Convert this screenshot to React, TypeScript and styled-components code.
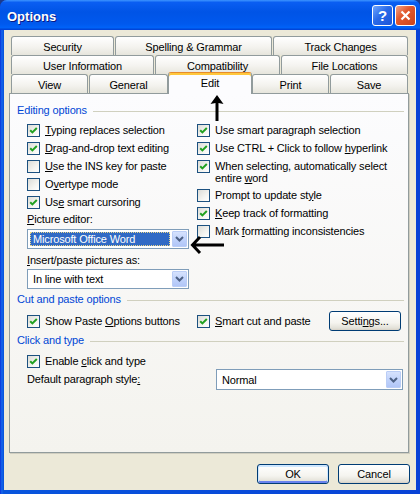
import React from 'react';
import styled, { createGlobalStyle, css } from 'styled-components';

const GlobalStyle = createGlobalStyle`
  html, body {
    margin: 0;
    padding: 0;
    background: #1b3a8c;
  }
  body {
    font-family: "Liberation Sans", Arial, sans-serif;
    font-size: 11px;
    letter-spacing: -0.15px;
    color: #000;
  }
  * { box-sizing: border-box; }
`;

const Window = styled.div`
  width: 420px;
  height: 494px;
  display: flex;
  flex-direction: column;
  border-radius: 7px 7px 0 0;
  overflow: hidden;
  background: #0842d6;
`;

const TitleBar = styled.div`
  height: 30px;
  flex: none;
  display: flex;
  align-items: center;
  gap: 2px;
  padding: 0 4px 0 7px;
  background: linear-gradient(#3d95ff 0%, #0a5ef2 8%, #0054e6 40%, #0059ee 80%, #0062f8 92%, #0050e0 96%, #003dd7 100%);
`;

const TitleText = styled.div`
  flex: 1;
  padding-top: 2px;
  color: #fff;
  font: bold 13px "Liberation Sans", Arial, sans-serif;
  letter-spacing: 0;
  text-shadow: 1px 1px 0 #0a1883;
`;

const CaptionButton = styled.div<{ $kind: 'help' | 'close' }>`
  width: 21px;
  height: 21px;
  border: 1px solid #fff;
  border-radius: 3px;
  display: grid;
  place-items: center;
  color: #fff;
  font: bold 15px "Liberation Sans", Arial, sans-serif;
  ${p => p.$kind === 'help'
    ? css`background: linear-gradient(135deg, #6fa6ff 0%, #2a6ae8 45%, #1d55d8 100%);`
    : css`background: linear-gradient(135deg, #f1a48a 0%, #e2592e 40%, #c9431c 100%);`}
`;

const Frame = styled.div`
  flex: 1;
  display: flex;
  padding: 0 4px 4px;
  background: linear-gradient(90deg, #0831d9 0, #166aee 2px, #0855dd 3px, #0842d6 100%);
`;

const Client = styled.div`
  flex: 1;
  display: flex;
  flex-direction: column;
  padding: 6px 7px 6px 5px;
  background: #ece9d8;
`;

const TabRow = styled.div`
  display: flex;
  gap: 1px;
  height: 19px;
  margin-left: 2px;
`;

const Tab = styled.div<{ $w: number; $active?: boolean }>`
  width: ${p => p.$w}px;
  height: 19px;
  flex: none;
  display: flex;
  align-items: center;
  justify-content: center;
  padding-top: 2px;
  white-space: nowrap;
  border: 1px solid #919b9c;
  border-bottom: none;
  border-radius: 3px 3px 0 0;
  background: linear-gradient(#ffffff, #f4f3ef 55%, #e6e5dc);
  ${p => p.$active && css`
    position: relative;
    z-index: 2;
    height: 22px;
    margin: -2px -1px -1px;
    padding: 0 0 1px;
    background: #fcfcfe;
    border-top: 1px solid #e68b2c;
    box-shadow: inset 0 2px 0 #ffc73c;
  `}
`;

const Panel = styled.div`
  position: relative;
  z-index: 1;
  height: 360px;
  flex: none;
  padding: 10px 4px 0 7px;
  border: 1px solid #919b9c;
  background: linear-gradient(#fcfcfe, #f4f3ee);
  box-shadow: 1px 1px 0 #d0cec0;
`;

const GroupHeader = styled.div<{ $mt?: number }>`
  display: flex;
  align-items: center;
  gap: 6px;
  margin-top: ${p => p.$mt ?? 0}px;
  line-height: 13px;
  color: #0046d5;
  &::after {
    content: '';
    flex: 1;
    height: 1px;
    margin-top: 1px;
    background: #d0d0bf;
  }
`;

const Columns = styled.div<{ $mt: number }>`
  display: grid;
  grid-template-columns: 170px 1fr;
  margin-top: ${p => p.$mt}px;
  padding-left: 10px;
`;

const Column = styled.div`
  display: flex;
  flex-direction: column;
  align-items: flex-start;
`;

const CheckRow = styled.div<{ $center?: boolean }>`
  display: flex;
  align-items: ${p => (p.$center ? 'center' : 'flex-start')};
  gap: 5px;
  min-height: 18px;
  padding: ${p => (p.$center ? '0' : '3px 0 2px')};
  line-height: 12px;
  white-space: nowrap;
`;

const Box = styled.div`
  width: 13px;
  height: 13px;
  flex: none;
  display: grid;
  place-items: center;
  border: 1px solid #1c5180;
  background: linear-gradient(135deg, #dcdcd7 0%, #f4f4f0 60%, #ffffff 100%);
`;

const Key = styled.span`
  text-decoration: underline;
`;

const FieldLabel = styled.div<{ $pt: number; $mb: number }>`
  padding-top: ${p => p.$pt}px;
  margin-bottom: ${p => p.$mb}px;
  line-height: 13px;
  white-space: nowrap;
`;

const Select = styled.div<{ $w: number; $h?: number }>`
  width: ${p => p.$w}px;
  height: ${p => p.$h ?? 20}px;
  flex: none;
  display: flex;
  align-items: stretch;
  gap: 2px;
  padding: 1px;
  border: 1px solid #7f9db9;
  background: #fff;
`;

const SelectValue = styled.div<{ $selected?: boolean }>`
  flex: 1;
  display: flex;
  align-items: center;
  padding-left: 3px;
  margin: 1px 0 1px 1px;
  white-space: nowrap;
  ${p => p.$selected && css`
    background: #316ac5;
    color: #fff;
    outline: 1px dotted #e8d68a;
    outline-offset: -1px;
  `}
`;

const DropButton = styled.div`
  width: 15px;
  flex: none;
  display: grid;
  place-items: center;
  border: 1px solid #bacdf6;
  border-radius: 1px;
  background: linear-gradient(#d6e2fd, #c1d3fb 50%, #b1c6f7);
`;

const CutRow = styled.div`
  display: grid;
  grid-template-columns: 170px 1fr;
  align-items: center;
  height: 20px;
  margin-top: 5px;
  padding-left: 10px;
`;

const RightCell = styled.div`
  display: flex;
  align-items: center;
  justify-content: space-between;
  padding-right: 3px;
`;

const PushButton = styled.div<{ $default?: boolean }>`
  width: 72px;
  height: 20px;
  display: flex;
  align-items: center;
  justify-content: center;
  white-space: nowrap;
  border: 1px solid #003c74;
  border-radius: 3px;
  background: linear-gradient(#ffffff, #f5f4ef 60%, #e3e1d8 90%, #d6d0c5);
  ${p => p.$default && css`
    box-shadow: inset 0 1px 0 1px #cee7ff, inset 0 -1px 0 1px #6982ee;
  `}
`;

const ParagraphRow = styled.div`
  display: flex;
  align-items: center;
  margin-top: -1px;
  padding: 0 1px 0 10px;
`;

const Footer = styled.div`
  display: flex;
  justify-content: flex-end;
  gap: 9px;
  margin: 11px -1px 0 0;
`;

const Annotation = styled.svg<{ $x: number; $y: number }>`
  position: absolute;
  left: ${p => p.$x}px;
  top: ${p => p.$y}px;
`;

const CheckMark = () => (
  <svg width="9" height="9" viewBox="0 0 9 9">
    <path d="M1.2 4.2 L3.4 6.4 L7.8 2" fill="none" stroke="#21a121" strokeWidth="2" />
  </svg>
);

const Check = ({ on, children, center }: { on?: boolean; children: React.ReactNode; center?: boolean }) => (
  <CheckRow $center={center}>
    <Box>{on && <CheckMark />}</Box>
    <div>{children}</div>
  </CheckRow>
);

const Chevron = () => (
  <svg width="9" height="6" viewBox="0 0 9 6">
    <path d="M1 1 L4.5 4.5 L8 1" fill="none" stroke="#4d6185" strokeWidth="2" />
  </svg>
);

const Drop = ({ w, h, value, selected }: { w: number; h?: number; value: string; selected?: boolean }) => (
  <Select $w={w} $h={h}>
    <SelectValue $selected={selected}>{value}</SelectValue>
    <DropButton><Chevron /></DropButton>
  </Select>
);

const App = () => {
  return (
    <Window>
      <GlobalStyle />
      <TitleBar>
        <TitleText>Options</TitleText>
        <CaptionButton $kind="help">?</CaptionButton>
        <CaptionButton $kind="close">
          <svg width="11" height="11" viewBox="0 0 11 11">
            <path d="M1.5 1.5 L9.5 9.5 M9.5 1.5 L1.5 9.5" stroke="#fff" strokeWidth="2.2" />
          </svg>
        </CaptionButton>
      </TitleBar>
      <Frame>
        <Client>
          <TabRow>
            <Tab $w={103}>Security</Tab>
            <Tab $w={157}>Spelling &amp; Grammar</Tab>
            <Tab $w={135}>Track Changes</Tab>
          </TabRow>
          <TabRow>
            <Tab $w={143}>User Information</Tab>
            <Tab $w={125}>Compatibility</Tab>
            <Tab $w={127}>File Locations</Tab>
          </TabRow>
          <TabRow>
            <Tab $w={77}>View</Tab>
            <Tab $w={79}>General</Tab>
            <Tab $w={84} $active>Edit</Tab>
            <Tab $w={77}>Print</Tab>
            <Tab $w={78}>Save</Tab>
          </TabRow>

          <Panel>
            <GroupHeader>Editing options</GroupHeader>
            <Columns $mt={4}>
              <Column>
                <Check on><Key>T</Key>yping replaces selection</Check>
                <Check on><Key>D</Key>rag-and-drop text editing</Check>
                <Check><Key>U</Key>se the INS key for paste</Check>
                <Check>O<Key>v</Key>ertype mode</Check>
                <Check on>Us<Key>e</Key> smart cursoring</Check>
                <FieldLabel $pt={2} $mb={3}><Key>P</Key>icture editor:</FieldLabel>
                <Drop w={162} value="Microsoft Office Word" selected />
                <FieldLabel $pt={5} $mb={2}><Key>I</Key>nsert/paste pictures as:</FieldLabel>
                <Drop w={162} value="In line with text" />
              </Column>
              <Column>
                <Check on>Use smart paragraph selection</Check>
                <Check on>Use CTRL + Click to follow <Key>h</Key>yperlink</Check>
                <Check on>When selecting, automatically select<br />entire <Key>w</Key>ord</Check>
                <Check>Prompt to update st<Key>y</Key>le</Check>
                <Check on><Key>K</Key>eep track of formatting</Check>
                <Check>Mark <Key>f</Key>ormatting inconsistencies</Check>
              </Column>
            </Columns>

            <GroupHeader $mt={4}>Cut and paste options</GroupHeader>
            <CutRow>
              <Check on center>Show Paste <Key>O</Key>ptions buttons</Check>
              <RightCell>
                <Check on center><Key>S</Key>mart cut and paste</Check>
                <PushButton><span>Setti<Key>n</Key>gs...</span></PushButton>
              </RightCell>
            </CutRow>

            <GroupHeader $mt={3}>Click and type</GroupHeader>
            <Columns $mt={5}>
              <Check on>Enable <Key>c</Key>lick and type</Check>
            </Columns>
            <ParagraphRow>
              <FieldLabel $pt={0} $mb={0} style={{ flex: 1 }}>Default paragraph style<Key>:</Key></FieldLabel>
              <Drop w={187} h={21} value="Normal" />
            </ParagraphRow>

            <Annotation $x={199} $y={1} width="16" height="26" viewBox="0 0 16 26">
              <path d="M8 0 L14.5 9 L9.5 8 L9.5 26 L6.5 26 L6.5 8 L1.5 9 Z" fill="#000" />
            </Annotation>
            <Annotation $x={180} $y={141} width="36" height="20" viewBox="0 0 36 20">
              <path d="M10 2 L2.5 10 L10 18 M3 10 H34" fill="none" stroke="#000" strokeWidth="3" />
            </Annotation>
          </Panel>

          <Footer>
            <PushButton $default>OK</PushButton>
            <PushButton>Cancel</PushButton>
          </Footer>
        </Client>
      </Frame>
    </Window>
  );
};

export default App;
